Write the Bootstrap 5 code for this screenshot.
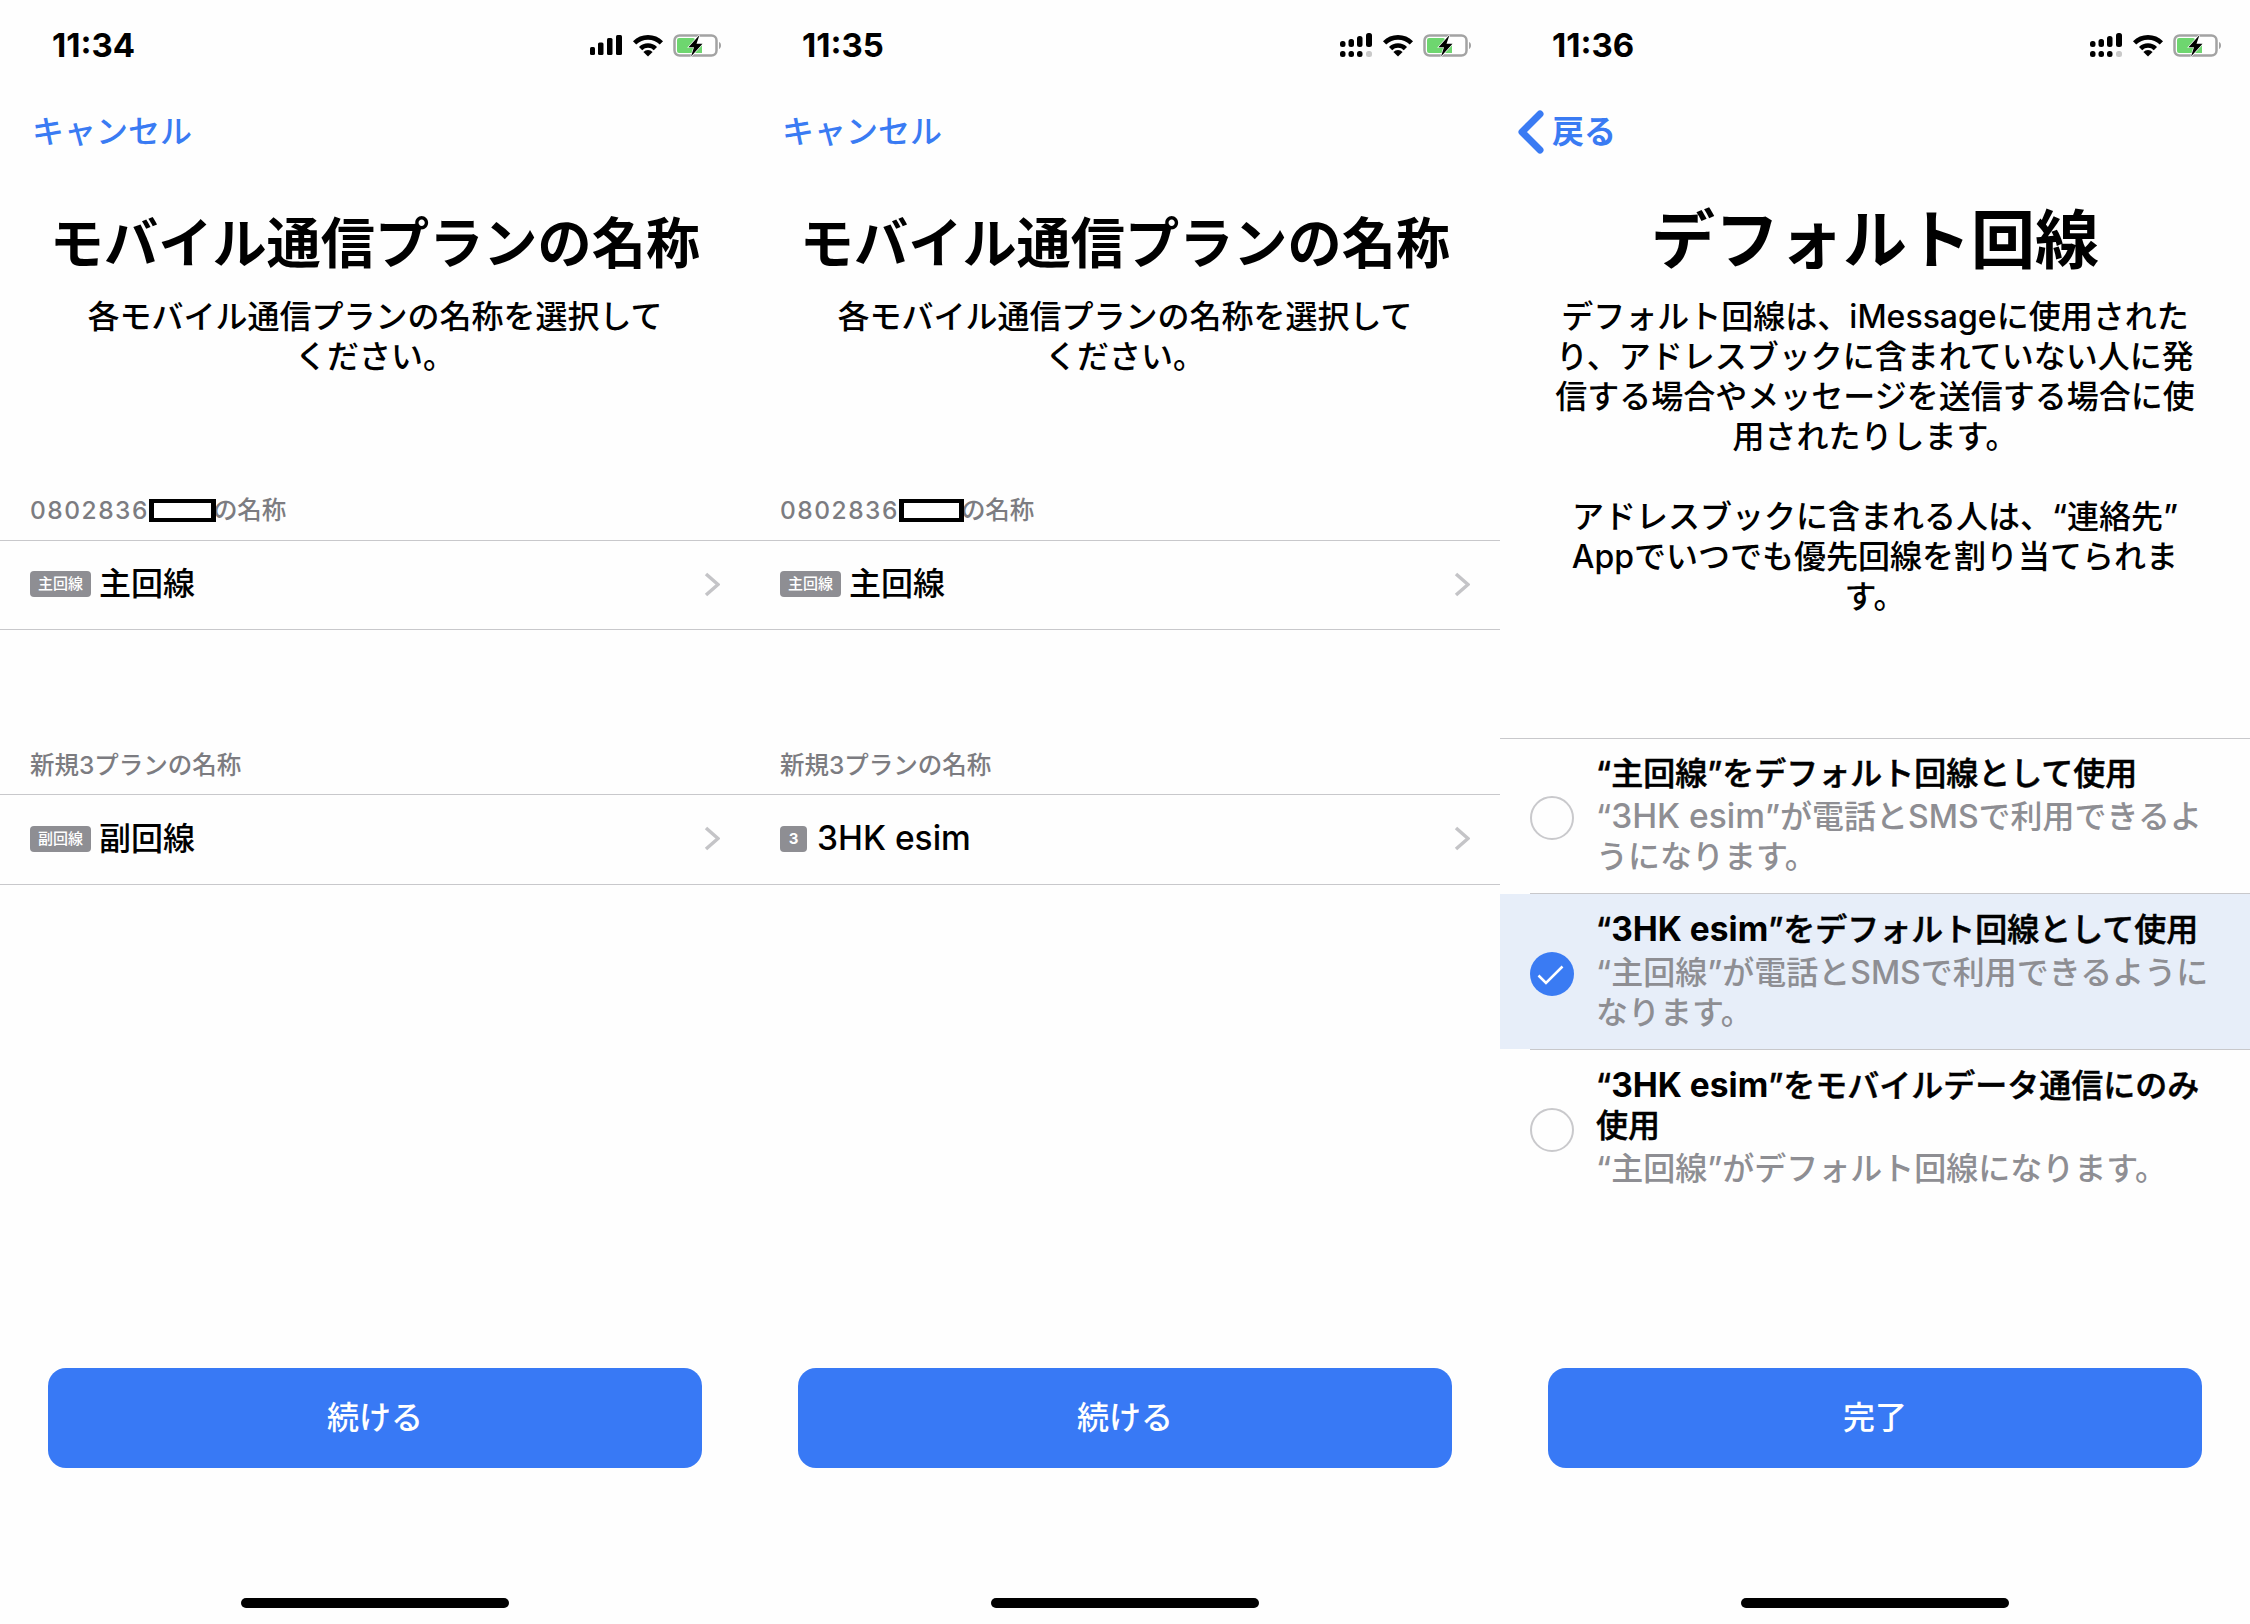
<!DOCTYPE html>
<html lang="ja">
<head>
  <meta charset="UTF-8" />
  <meta name="viewport" content="width=device-width, initial-scale=1.0" />
  <title>モバイル通信プランの名称</title>
  <link href="https://cdn.jsdelivr.net/npm/bootstrap@5.3.0/dist/css/bootstrap.min.css" rel="stylesheet" />
  <style>
    body { width: 2250px; height: 1624px; overflow: hidden; background: #fefefe; color: #000;
      font-family: Inter, "Noto Sans CJK JP", sans-serif; font-weight: 500; font-size: 32px; line-height: 40px; }
    .phone { width: 750px; height: 1624px; flex: none; }
    .status-line { height: 40px; margin-top: 25px; padding: 0 29px 0 52px; }
    .status-time { font-size: 33px; font-weight: 700; line-height: 40px; }
    .status-icons { gap: 9px; }
    .top-nav { height: 40px; margin-top: 47px; padding-left: 32px; color: #3a7bf3; }
    .top-nav.with-back { padding-left: 17px; gap: 8px; font-weight: 600; }
    .page-title { margin: 56px 0 0; font-size: 54.2px; line-height: 70px; font-weight: 700; text-align: center; }
    .page-title.wide-title { margin-top: 50px; font-size: 64px; line-height: 76px; }
    .page-sub { margin: 19px 0 0; text-align: center; }
    .plan-head { height: 45px; padding: 0 30px; font-size: 24.5px; line-height: 28px; color: #7c7c81; border-bottom: 1px solid #c8c8cb; }
    .plan-head.first-head { margin-top: 119px; }
    .plan-head.next-head { margin-top: 121px; height: 44px; }
    .digits { letter-spacing: 1.5px; }
    .blackout { display: inline-block; width: 67px; height: 23px; margin-right: -3px; border: 4px solid #000; border-left-width: 5px; border-right-width: 5px; background: #fff; vertical-align: -3px; position: relative; }
    .blackout.short-box { width: 65px; }
    .plan-row { height: 89px; padding: 0 30px 2px; border-bottom: 1px solid #c8c8cb; }
    .plan-row.tall-row { height: 90px; }
    .plan-tag { width: 61px; height: 26px; margin-right: 8px; border-radius: 4px; background: #8e8e93; color: #fff; font-size: 15px; line-height: 26px; text-align: center; }
    .plan-tag.tag-short { width: 27px; margin-right: 10px; font-weight: 700; }
    .latin-name { font-size: 33.500px; line-height: 1; }
    .sim-list { margin-top: 121px; border-top: 1px solid #c8c8cb; }
    .sim-option { padding: 16px 20px 16px 30px; gap: 22px; }
    .sim-option.first-option { padding-top: 15px; }
    .sim-option.picked { background: #e7eef9; }
    .option-rule { height: 1px; margin-left: 30px; background: #c8c8cb; }
    .radio-mark { width: 44px; height: 44px; margin-top: 5px; flex: none; border-radius: 50%; border: 2px solid #c9c9cc; }
    .option-title { height: 40px; font-weight: 500; -webkit-text-stroke: .5px #000; white-space: nowrap; }
    .option-title.two-lines { height: 80px; }
    .option-title b { font-weight: 700; font-size: 33.500px; line-height: 1; -webkit-text-stroke: 0; }
    .option-sub { margin-top: 3px; color: #8e8e93; white-space: nowrap; }
    .next-btn { width: 654px; height: 100px; margin: auto 0 0 48px; border: 0; border-radius: 18px; background: #3879f5; color: #fff; font-size: 32px; font-weight: 500; }
    .home-bar { width: 268px; height: 10px; margin: 130px 0 16px 241px; border-radius: 5px; background: #000; }
  </style>
</head>
<body>
  <svg class="d-none">
    <symbol id="i-signal" viewBox="0 0 34 22">
      <rect x="1" y="13" width="5" height="8" rx="1.5"/>
      <rect x="9" y="8.5" width="5.5" height="12.5" rx="1.5"/>
      <rect x="18" y="4" width="5.5" height="17" rx="1.5"/>
      <rect x="27" y="1" width="6" height="20" rx="1.5"/>
    </symbol>
    <symbol id="i-signal-dual" viewBox="0 0 34 26">
      <rect x="1" y="9" width="5.5" height="6" rx="2.5"/>
      <rect x="9.5" y="7" width="5.5" height="8" rx="2.5"/>
      <rect x="18" y="4" width="5.5" height="11" rx="2.5"/>
      <rect x="27" y="1" width="6" height="14" rx="2.5"/>
      <rect x="1" y="19" width="5.5" height="6" rx="2.5"/>
      <rect x="9.5" y="19" width="5.5" height="6" rx="2.5"/>
      <rect x="18" y="19" width="5.5" height="6" rx="2.5"/>
      <rect x="27" y="19" width="6" height="6" rx="2.5" fill="#c9c9c9"/>
    </symbol>
    <symbol id="i-wifi" viewBox="0 0 32 23">
      <path d="M2.6 8.9A19 19 0 0 1 29.4 8.9" fill="none" stroke="#000" stroke-width="4.6"/>
      <path d="M8.6 14.6A10.5 10.5 0 0 1 23.4 14.6" fill="none" stroke="#000" stroke-width="4.6"/>
      <path d="M16 22.5L11.4 17.9A6.5 6.5 0 0 1 20.6 17.9Z"/>
    </symbol>
    <symbol id="i-battery" viewBox="0 0 48 23">
      <rect x="1.5" y="1.5" width="42" height="20" rx="5" fill="#fff" stroke="#a3a3a3" stroke-width="2.5"/>
      <rect x="4" y="4" width="18" height="15" rx="2" fill="#6ed66f"/>
      <rect x="22" y="11" width="7" height="8" fill="#6ed66f"/>
      <path d="M46 8c1.4.6 2 1.9 2 3.5S47.400 14.400 46 15Z" fill="#a3a3a3"/>
      <path d="M26.500 1L15.500 13.200H21L18 22.500L29.500 9.800H23.500Z" fill="#000" stroke="#fff" stroke-width="1.200" paint-order="stroke"/>
    </symbol>
    <symbol id="i-chevron" viewBox="0 0 16 25">
      <path d="M2 2L14 12.500L2 23" fill="none" stroke="#c4c4c7" stroke-width="3.500"/>
    </symbol>
  </svg>

  <div class="d-flex">
    <!-- 1: 主回線 / 副回線 -->
    <section class="phone d-flex flex-column">
      <div class="status-line d-flex justify-content-between align-items-center">
        <span class="status-time">11:34</span>
        <div class="status-icons d-flex align-items-center">
          <svg width="34" height="22"><use href="#i-signal"/></svg>
          <svg width="32" height="23"><use href="#i-wifi"/></svg>
          <svg width="48" height="23"><use href="#i-battery"/></svg>
        </div>
      </div>
      <div class="top-nav">キャンセル</div>
      <h1 class="page-title">モバイル通信プランの名称</h1>
      <p class="page-sub">各モバイル通信プランの名称を選択して<br>ください。</p>
      <div class="plan-head first-head"><span class="digits">0802836</span><span class="blackout"></span>の名称</div>
      <div class="plan-row d-flex align-items-center">
        <span class="plan-tag">主回線</span><span>主回線</span>
        <svg class="ms-auto" width="16" height="25"><use href="#i-chevron"/></svg>
      </div>
      <div class="plan-head next-head">新規3プランの名称</div>
      <div class="plan-row tall-row d-flex align-items-center">
        <span class="plan-tag">副回線</span><span>副回線</span>
        <svg class="ms-auto" width="16" height="25"><use href="#i-chevron"/></svg>
      </div>
      <button class="btn next-btn">続ける</button>
      <div class="home-bar"></div>
    </section>

    <!-- 2: 3HK esim -->
    <section class="phone d-flex flex-column">
      <div class="status-line d-flex justify-content-between align-items-center">
        <span class="status-time">11:35</span>
        <div class="status-icons d-flex align-items-center">
          <svg width="34" height="26"><use href="#i-signal-dual"/></svg>
          <svg width="32" height="23"><use href="#i-wifi"/></svg>
          <svg width="48" height="23"><use href="#i-battery"/></svg>
        </div>
      </div>
      <div class="top-nav">キャンセル</div>
      <h1 class="page-title">モバイル通信プランの名称</h1>
      <p class="page-sub">各モバイル通信プランの名称を選択して<br>ください。</p>
      <div class="plan-head first-head"><span class="digits">0802836</span><span class="blackout short-box"></span>の名称</div>
      <div class="plan-row d-flex align-items-center">
        <span class="plan-tag">主回線</span><span>主回線</span>
        <svg class="ms-auto" width="16" height="25"><use href="#i-chevron"/></svg>
      </div>
      <div class="plan-head next-head">新規3プランの名称</div>
      <div class="plan-row tall-row d-flex align-items-center">
        <span class="plan-tag tag-short">3</span><span class="latin-name">3HK esim</span>
        <svg class="ms-auto" width="16" height="25"><use href="#i-chevron"/></svg>
      </div>
      <button class="btn next-btn">続ける</button>
      <div class="home-bar"></div>
    </section>

    <!-- 3: デフォルト回線 -->
    <section class="phone d-flex flex-column">
      <div class="status-line d-flex justify-content-between align-items-center">
        <span class="status-time">11:36</span>
        <div class="status-icons d-flex align-items-center">
          <svg width="34" height="26"><use href="#i-signal-dual"/></svg>
          <svg width="32" height="23"><use href="#i-wifi"/></svg>
          <svg width="48" height="23"><use href="#i-battery"/></svg>
        </div>
      </div>
      <div class="top-nav with-back d-flex align-items-center">
        <svg width="27" height="44" viewBox="0 0 27 44"><path d="M23 4L5 22L23 40" fill="none" stroke="#3a7bf3" stroke-width="7" stroke-linecap="round" stroke-linejoin="round"/></svg>
        <span>戻る</span>
      </div>
      <h1 class="page-title wide-title">デフォルト回線</h1>
      <p class="page-sub">デフォルト回線は、iMessageに使用された<br>り、アドレスブックに含まれていない人に発<br>信する場合やメッセージを送信する場合に使<br>用されたりします。<br><br>アドレスブックに含まれる人は、“連絡先”<br>Appでいつでも優先回線を割り当てられま<br>す。</p>
      <div class="sim-list">
        <div class="sim-option first-option d-flex align-items-center">
          <span class="radio-mark"></span>
          <div>
            <div class="option-title">“主回線”をデフォルト回線として使用</div>
            <div class="option-sub">“<span class="latin-name">3HK esim</span>”が電話とSMSで利用できるよ<br>うになります。</div>
          </div>
        </div>
        <div class="option-rule"></div>
        <div class="sim-option picked d-flex align-items-center">
          <span class="radio-mark border-0">
            <svg class="d-block" width="44" height="44" viewBox="0 0 44 44"><circle cx="22" cy="22" r="22" fill="#3a7bf3"/><path d="M8.500 23.500L16 31L32.500 14.500" fill="none" stroke="#fff" stroke-width="2.500"/></svg>
          </span>
          <div>
            <div class="option-title">“<b>3HK esim</b>”をデフォルト回線として使用</div>
            <div class="option-sub">“主回線”が電話とSMSで利用できるように<br>なります。</div>
          </div>
        </div>
        <div class="option-rule"></div>
        <div class="sim-option d-flex align-items-center">
          <span class="radio-mark"></span>
          <div>
            <div class="option-title two-lines">“<b>3HK esim</b>”をモバイルデータ通信にのみ<br>使用</div>
            <div class="option-sub">“主回線”がデフォルト回線になります。</div>
          </div>
        </div>
      </div>
      <button class="btn next-btn">完了</button>
      <div class="home-bar"></div>
    </section>
  </div>
  <script src="https://cdn.jsdelivr.net/npm/bootstrap@5.3.0/dist/js/bootstrap.bundle.min.js"></script>
</body>
</html>
